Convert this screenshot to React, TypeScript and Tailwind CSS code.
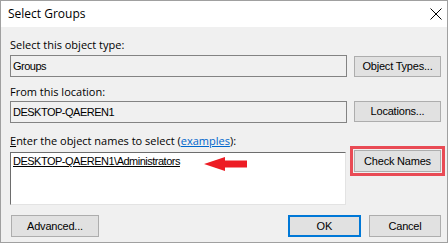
import React from 'react';

const labelFont = { fontFamily: '"Segoe UI", "Open Sans", sans-serif' };

function Btn({ children, className = '' }: { children: React.ReactNode; className?: string }) {
  return (
    <div
      className={`flex items-center justify-center bg-[#e1e1e1] border border-[#adadad] text-[11px] text-black tracking-[-0.2px] ${className}`}
    >
      {children}
    </div>
  );
}

export default function App() {
  return (
    <div
      className="w-[448px] h-[243px] flex flex-col border border-[#a0a0a0] bg-[#f0f0f0] text-black"
      style={{ fontFamily: '"Liberation Sans", Arial, sans-serif' }}
    >
      {/* title bar */}
      <div className="h-[26px] shrink-0 bg-white flex items-center justify-between pl-[7px] pr-[4px]">
        <span className="text-[12px] leading-[16px]" style={labelFont}>
          Select Groups
        </span>
        <svg width="12" height="12" viewBox="0 0 12 12" className="mr-[1px]">
          <path d="M0.5 0.5 L11.5 11.5 M11.5 0.5 L0.5 11.5" stroke="#000" strokeWidth="1" />
        </svg>
      </div>

      <div className="flex-1 pl-[9px] pr-[6px]">
        <div className="mt-[10px] h-[16px] leading-[16px] text-[11px]" style={labelFont}>
          Select this object type:
        </div>
        <div className="mt-[2px] flex gap-[7px]">
          <div className="w-[337px] h-[22px] border border-[#838383] bg-[#f0f0f0] flex items-center pl-[2px] text-[11px] tracking-[-0.5px]">
            Groups
          </div>
          <Btn className="w-[87px] h-[21px] mt-[1px]">Object Types...</Btn>
        </div>

        <div className="mt-[7px] h-[16px] leading-[16px] text-[11px]" style={labelFont}>
          From this location:
        </div>
        <div className="mt-[1px] flex gap-[7px]">
          <div className="w-[337px] h-[22px] border border-[#838383] bg-[#f0f0f0] flex items-center pl-[2px] text-[11px] tracking-[-0.5px]">
            DESKTOP-QAEREN1
          </div>
          <Btn className="w-[87px] h-[21px]">Locations...</Btn>
        </div>

        <div className="mt-[10px] h-[16px] leading-[16px] text-[11px]" style={labelFont}>
          <span className="underline">E</span>nter the object names to select (
          <span className="text-[#0066cc] underline">examples</span>):
        </div>
        <div className="mt-[3px] flex gap-[7px]">
          <div className="relative w-[336px] h-[53px] bg-white border-t border-l border-[#6d6d6d] border-r-[#e3e3e3] border-b-[#e3e3e3] border-r border-b pl-[2px] pt-[2px] text-[11px] leading-[13px]">
            <span className="underline tracking-[-0.5px]">DESKTOP-QAEREN1\Administrators</span>
            <svg
              width="43"
              height="14"
              viewBox="0 0 43 14"
              className="absolute left-[193px] top-[4px]"
            >
              <polygon points="0,7 21,0 21,3.5 43,3.5 43,10.5 21,10.5 21,14" fill="#ed1c24" />
            </svg>
          </div>
          <Btn className="w-[87px] h-[22px] -mt-[2px] ml-[1px] outline-[3px] outline-solid outline-[#e94b55] outline-offset-[1px]">
            Check Names
          </Btn>
        </div>

        <div className="mt-[10px] flex">
          <Btn className="w-[88px] h-[22px] ml-[1px]">Advanced...</Btn>
          <div className="flex-1" />
          <div className="flex items-center justify-center w-[73px] h-[22px] bg-[#e1e1e1] border-2 border-[#0078d7] text-[11px]">
            OK
          </div>
          <Btn className="w-[72px] h-[22px] ml-[8px]">Cancel</Btn>
        </div>
      </div>
    </div>
  );
}
